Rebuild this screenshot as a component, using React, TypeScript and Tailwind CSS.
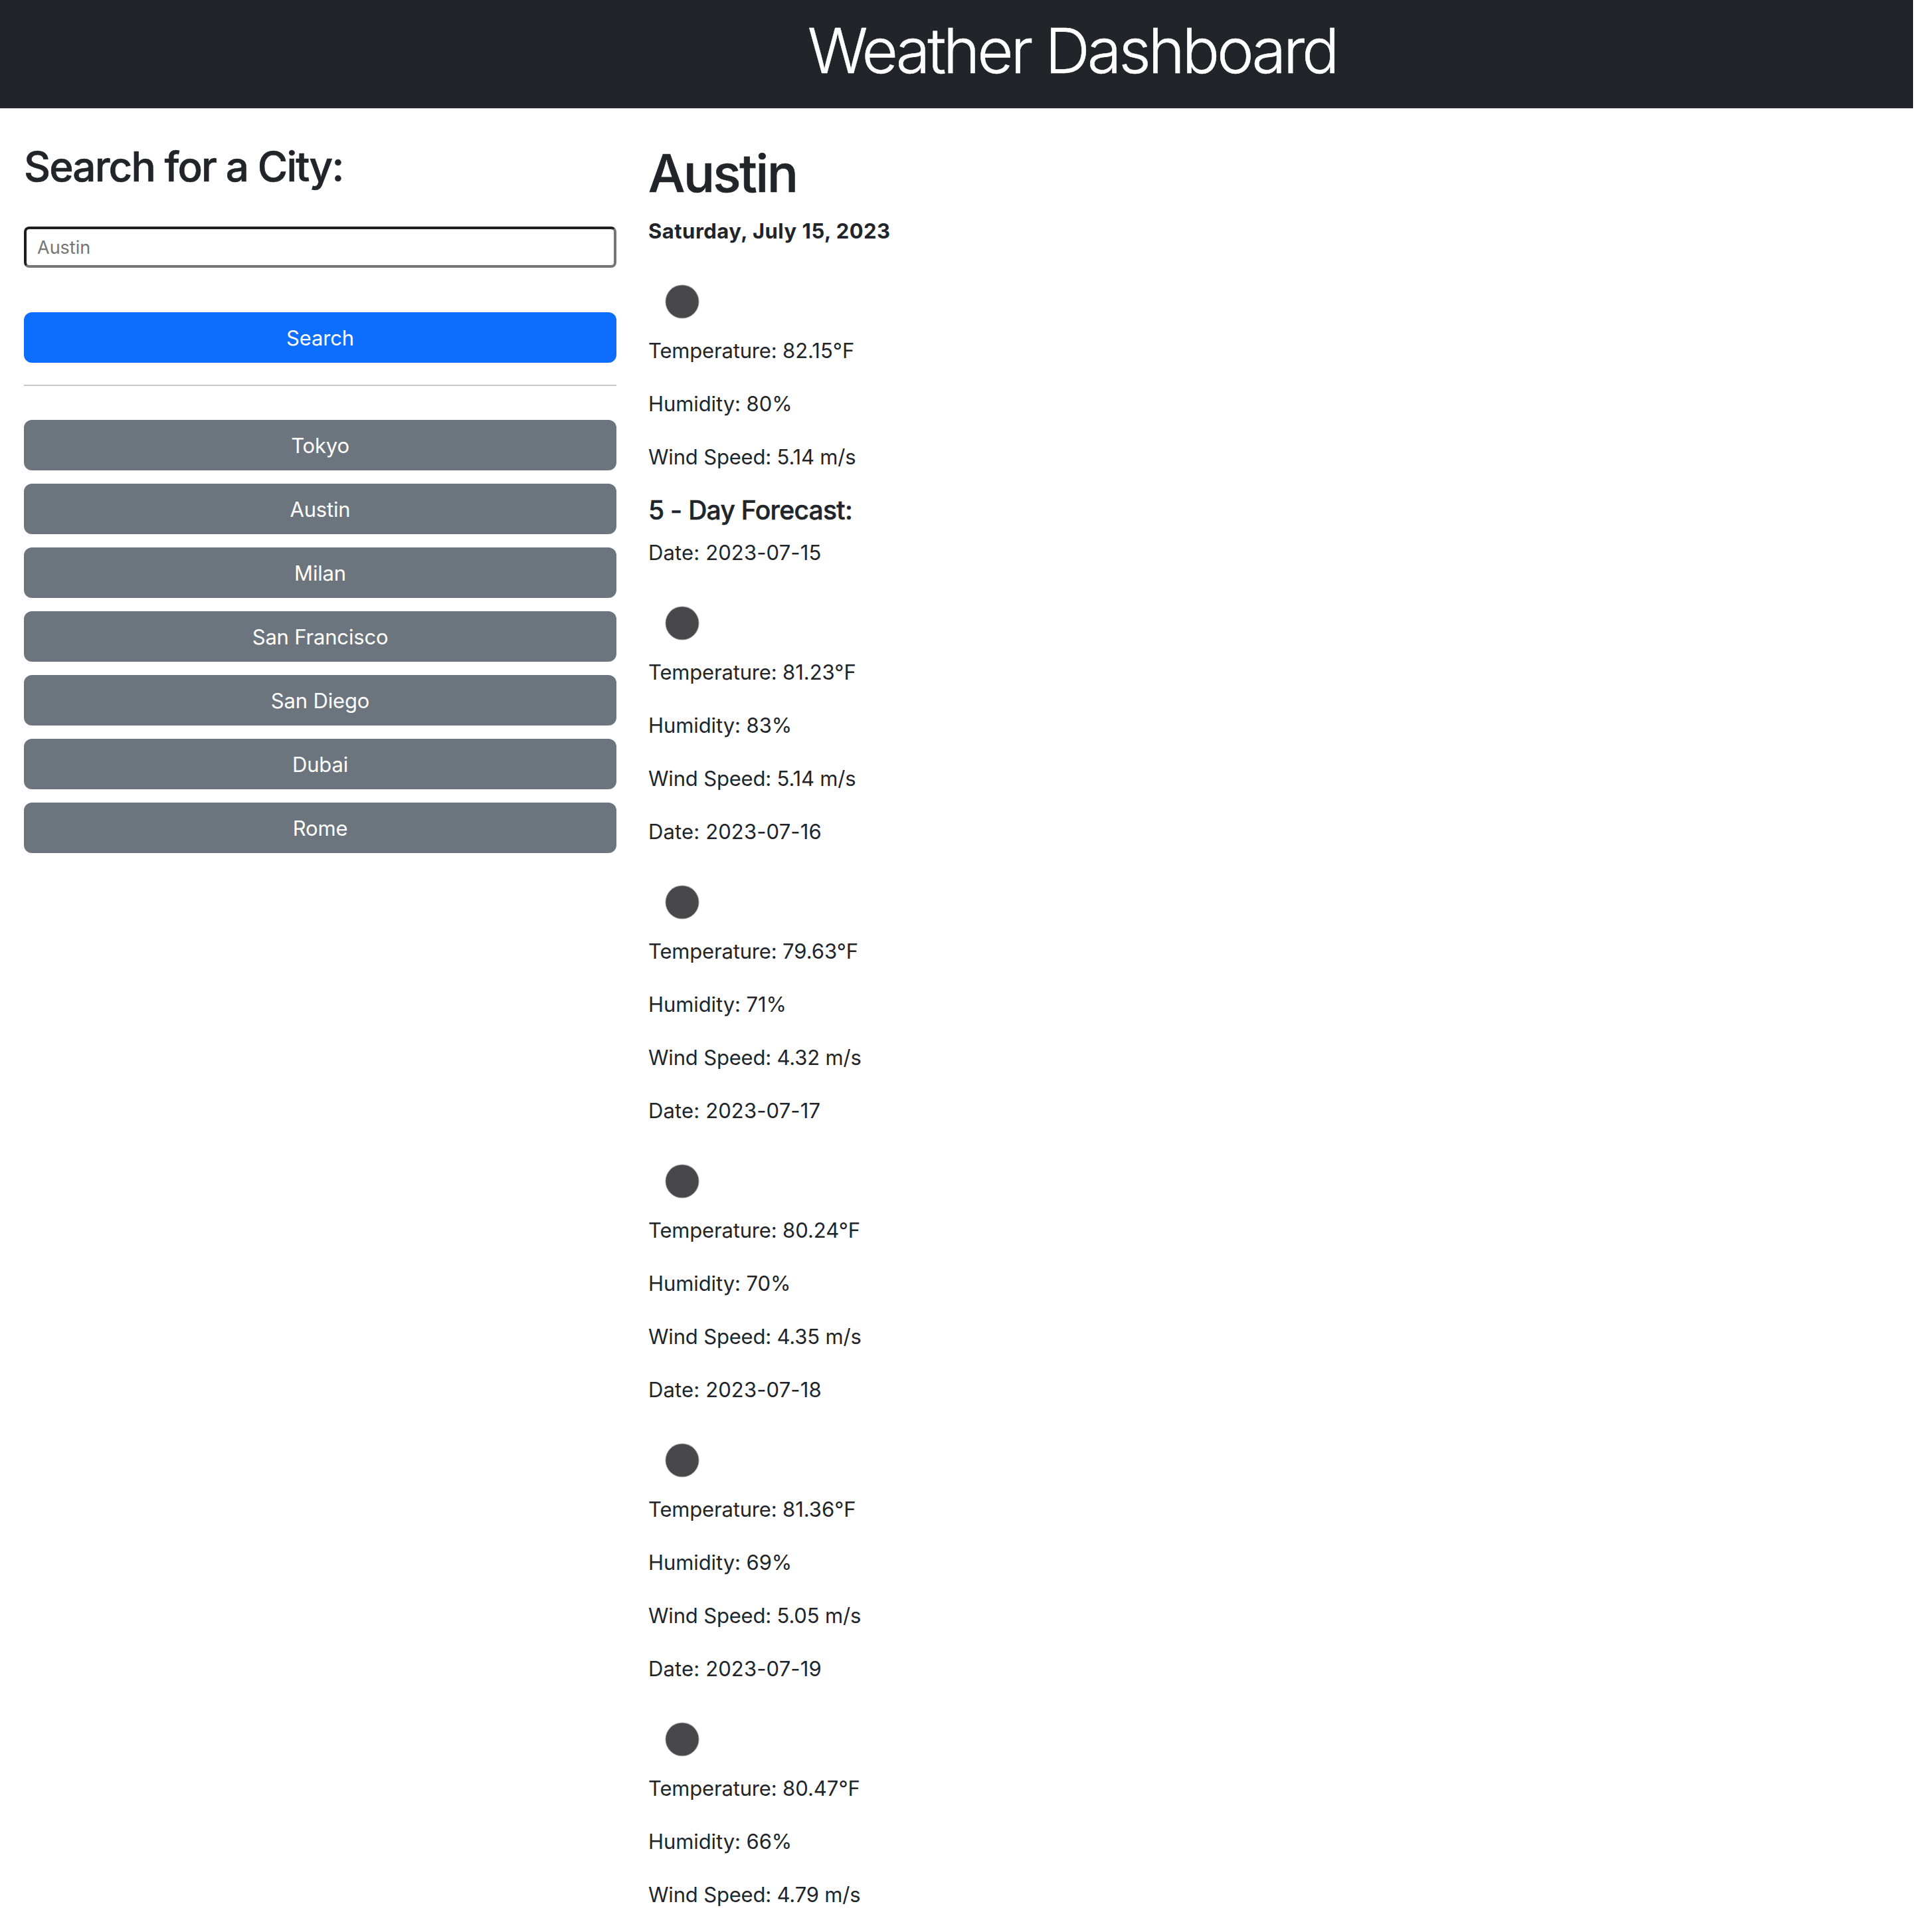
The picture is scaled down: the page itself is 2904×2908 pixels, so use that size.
const cities = ['Tokyo', 'Austin', 'Milan', 'San Francisco', 'San Diego', 'Dubai', 'Rome'];

type Reading = { temp: string; humidity: number; wind: string };

const current: Reading = { temp: '82.15', humidity: 80, wind: '5.14' };

const forecast: (Reading & { date: string })[] = [
  { date: '2023-07-15', temp: '81.23', humidity: 83, wind: '5.14' },
  { date: '2023-07-16', temp: '79.63', humidity: 71, wind: '4.32' },
  { date: '2023-07-17', temp: '80.24', humidity: 70, wind: '4.35' },
  { date: '2023-07-18', temp: '81.36', humidity: 69, wind: '5.05' },
  { date: '2023-07-19', temp: '80.47', humidity: 66, wind: '4.79' },
];

function ClearNightIcon() {
  return (
    <svg className="block size-[100px]" viewBox="0 0 100 100">
      <circle cx="51" cy="50" r="25.6" fill="#a8a8a8" />
      <circle cx="51" cy="50" r="24.6" fill="#48484a" />
    </svg>
  );
}

function Conditions({ temp, humidity, wind }: Reading) {
  return (
    <>
      <ClearNightIcon />
      <p className="mb-8">
        <span className="tracking-[-0.18px]">Temperature: </span>
        {temp}°F
      </p>
      <p className="mb-8 tracking-[-0.08px]">Humidity: {humidity}%</p>
      <p className="mb-8 tracking-[-0.18px]">Wind Speed: {wind} m/s</p>
    </>
  );
}

export default function App() {
  return (
    <div className="min-h-[2908px] w-[2880px] bg-white font-['Inter',sans-serif] text-[31px] leading-[48px] text-[#212529]">
      <header className="h-[163px] bg-[#212529] pt-[19px] pl-[348px] text-center">
        <h1 className="text-[94px] leading-[115px] font-light tracking-[-4.2px] text-white [-webkit-text-stroke:0.5px]">
          Weather Dashboard
        </h1>
      </header>
      <div className="flex gap-12 pt-[49px] pl-9">
        <aside className="w-[892px]">
          <h2 className="text-[62px] leading-[77px] font-medium tracking-[-1.88px] [-webkit-text-stroke:0.6px]">
            Search for a City:
          </h2>
          <input
            className="mt-[52px] block h-[62px] w-full rounded-lg border-4 border-t-[#1e1e20] border-r-[#767676] border-b-[#767676] border-l-[#1e1e20] px-4 text-[27px] placeholder:text-[#757575]"
            placeholder="Austin"
          />
          <button className="mt-[67px] block h-[76px] w-full rounded-xl bg-[#0d6efd] pt-0.5 tracking-[-0.17px] text-white">
            Search
          </button>
          <hr className="mt-[33px] border-t-2 border-[#c7c8c9]" />
          <div className="mt-[51px] flex flex-col gap-5">
            {cities.map((city) => (
              <button key={city} className="h-[76px] rounded-xl bg-[#6c757d] pt-0.5 tracking-[-0.18px] text-white">
                {city}
              </button>
            ))}
          </div>
        </aside>
        <main>
          <h1 className="mb-[15px] pt-px text-[78px] leading-[96px] font-medium tracking-[-2.3px] [-webkit-text-stroke:0.7px]">
            Austin
          </h1>
          <p className="mb-8 font-bold tracking-[0.49px]">Saturday, July 15, 2023</p>
          <Conditions {...current} />
          <h5 className="mb-4 text-[39px] leading-[48px] font-medium tracking-[-0.7px] [-webkit-text-stroke:0.5px]">
            5 - Day Forecast:
          </h5>
          {forecast.map(({ date, ...reading }) => (
            <div key={date}>
              <p className="mb-8 tracking-[0.13px]">Date: {date}</p>
              <Conditions {...reading} />
            </div>
          ))}
        </main>
      </div>
    </div>
  );
}
